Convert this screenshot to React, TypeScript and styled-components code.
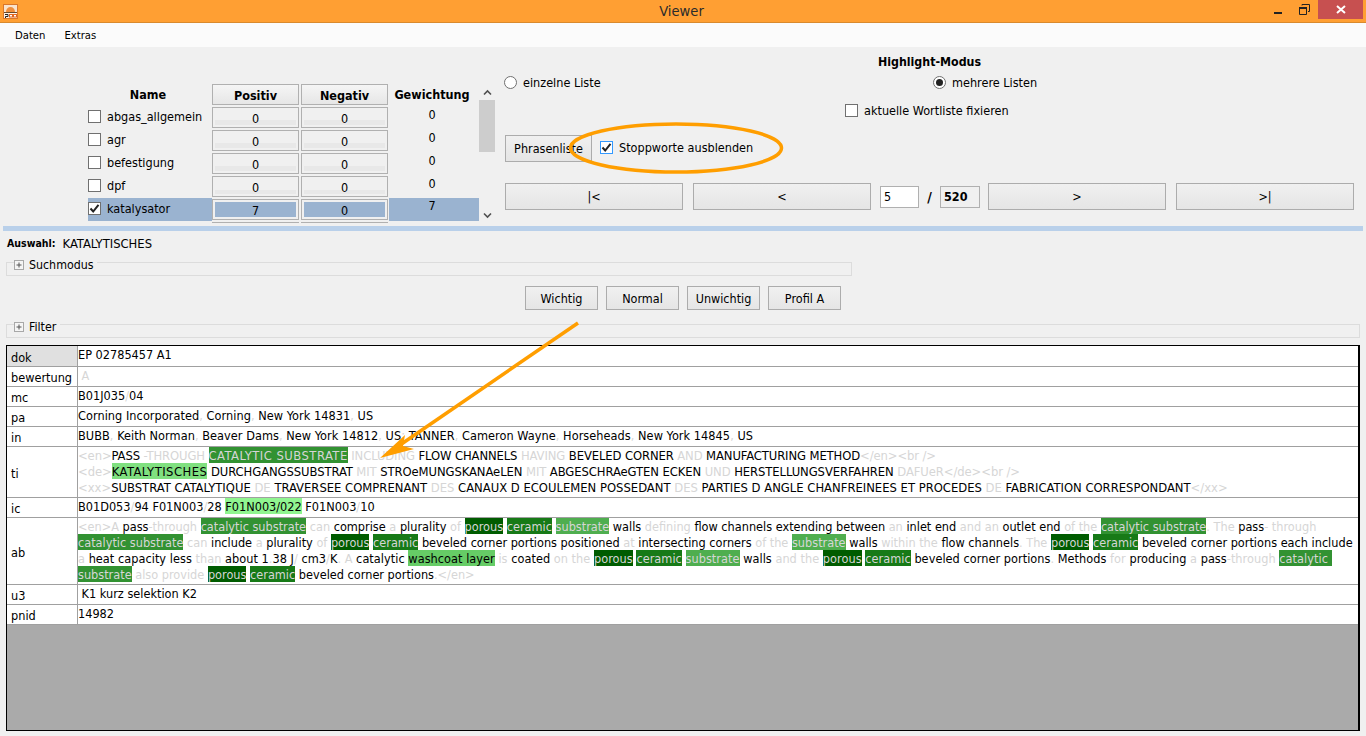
import React from "react";
import styled, { createGlobalStyle } from "styled-components";

const FONT = `"DejaVu Sans", "Noto Sans", sans-serif`;

const Global = createGlobalStyle`
  html, body { margin: 0; padding: 0; width: 1366px; height: 736px; overflow: hidden; background: #f0f0f0; }
  body { font-family: ${FONT}; font-size: 12.5px; color: #000; }
  * { box-sizing: border-box; }
`;

const Page = styled.div`
  position: relative;
  width: 1366px;
  height: 736px;
  display: flex;
  flex-direction: column;
  font-stretch: condensed;
`;

const TitleBar = styled.div`
  height: 23px;
  flex: none;
  display: grid;
  grid-template-columns: 1fr auto;
  align-items: start;
  background: #ff9f33;
  border-bottom: 1px solid #d98a2e;
`;
const TitleLeft = styled.div`
  display: flex;
  align-items: center;
  height: 22px;
  padding-left: 3px;
`;
const Title = styled.div`
  flex: 1;
  text-align: center;
  font-size: 14.6px;
  color: #2b2b2b;
  padding: 0 0 1px 80px;
`;
const WinControls = styled.div`
  display: flex;
  align-items: flex-start;
`;
const WinBtn = styled.div<{ $w: number; $close?: boolean }>`
  display: flex;
  align-items: center;
  justify-content: center;
  width: ${(p) => p.$w}px;
  height: 19px;
  margin-right: ${(p) => (p.$close ? "3px" : "0")};
  background: ${(p) => (p.$close ? "#c75050" : "transparent")};
`;

const MenuBar = styled.div`
  height: 24px;
  flex: none;
  display: flex;
  align-items: center;
  gap: 19px;
  padding-left: 15px;
  background: #fbfbfb;
  font-size: 11.2px;
`;

const TopPanel = styled.div`
  height: 178px;
  flex: none;
  display: flex;
`;
const ListArea = styled.div`
  width: 505px;
  padding: 37px 0 0 88px;
  display: flex;
  align-items: flex-start;
`;
const WordList = styled.div`
  width: 391px;
  height: 139px;
  overflow: hidden;
`;
const WordRow = styled.div`
  display: grid;
  grid-template-columns: 124px 87px 2px 87px 1px 90px;
  height: 23px;
`;
const HeaderLabel = styled.div<{ $col: number }>`
  grid-column: ${(p) => p.$col};
  display: flex;
  align-items: center;
  justify-content: center;
  padding-right: 4px;
  font-weight: bold;
  font-size: 12.5px;
  height: 21px;
`;
const HeaderButton = styled.div<{ $col: number }>`
  grid-column: ${(p) => p.$col};
  display: flex;
  align-items: center;
  justify-content: center;
  padding-top: 1px;
  height: 21px;
  font-weight: bold;
  font-size: 12.5px;
  border: 1px solid #b0b0b0;
  background: linear-gradient(#f5f5f5, #e6e6e6);
`;
const NameCell = styled.label<{ $sel?: boolean }>`
  display: flex;
  align-items: center;
  gap: 6px;
  height: 23px;
  margin-top: ${(p) => (p.$sel ? "-1px" : "0")};
  padding-bottom: ${(p) => (p.$sel ? "2px" : "4px")};
  font-size: 12.55px;
  background: ${(p) => (p.$sel ? "#9ab3d0" : "transparent")};
`;
const Spin = styled.div<{ $col: number }>`
  grid-column: ${(p) => p.$col};
  height: 21px;
  border: 1px solid #b0b0b0;
  padding: 2px;
  background: #f0f0f0;
`;
const SpinInner = styled.div<{ $sel?: boolean }>`
  height: 15px;
  padding-top: 2px;
  display: flex;
  align-items: center;
  justify-content: center;
  font-size: 12.5px;
  background: ${(p) => (p.$sel ? "#9ab3d0" : "linear-gradient(#f0f0f0 70%, #e8e8e8 70%)")};
`;
const WeightCell = styled.div<{ $sel?: boolean; $col: number }>`
  grid-column: ${(p) => p.$col};
  display: flex;
  align-items: center;
  justify-content: center;
  height: 23px;
  margin-top: ${(p) => (p.$sel ? "-1px" : "0")};
  padding: 0 4px 8px 0;
  font-size: 12.5px;
  background: ${(p) => (p.$sel ? "#9ab3d0" : "transparent")};
`;
const ScrollBar = styled.div`
  width: 16px;
  height: 139px;
  background: #f0f0f0;
  display: flex;
  flex-direction: column;
  align-items: center;
`;
const ScrollEnd = styled.div`
  height: 16px;
  flex: none;
  display: flex;
  align-items: center;
  justify-content: center;
`;
const ScrollTrack = styled.div`
  flex: 1;
  width: 100%;
`;
const ScrollThumb = styled.div`
  height: 52px;
  width: 100%;
  background: #cdcdcd;
`;

const Box = styled.span<{ $focus?: boolean }>`
  flex: none;
  display: inline-flex;
  align-items: center;
  justify-content: center;
  width: 13px;
  height: 13px;
  background: #fff;
  border: 1px solid ${(p) => (p.$focus ? "#3399ff" : "#707070")};
`;
const Radio = styled.span<{ $on?: boolean }>`
  flex: none;
  display: inline-flex;
  align-items: center;
  justify-content: center;
  width: 13px;
  height: 13px;
  border-radius: 50%;
  background: #fff;
  border: 1px solid #707070;
  &::after {
    content: "";
    display: ${(p) => (p.$on ? "block" : "none")};
    width: 7px;
    height: 7px;
    border-radius: 50%;
    background: #222;
  }
`;

const Controls = styled.div`
  width: 849px;
  padding-top: 7px;
  display: flex;
  flex-direction: column;
`;
const ModeHeading = styled.div`
  height: 16px;
  line-height: 16px;
  text-align: center;
  font-weight: bold;
  font-size: 12.3px;
`;
const RadioRow = styled.div`
  margin-top: 4px;
  height: 16px;
  display: grid;
  grid-template-columns: 428px 1fr;
`;
const Option = styled.label<{ $indent?: number; $raise?: number }>`
  display: flex;
  align-items: center;
  gap: 6px;
  height: 16px;
  font-size: 12.55px;
  margin-left: ${(p) => p.$indent ?? 0}px;
  margin-top: ${(p) => p.$raise ?? 0}px;
`;
const FixRow = styled.div`
  margin-top: 12px;
  height: 16px;
  padding-left: 340px;
`;
const PhraseRow = styled.div`
  margin-top: 17px;
  height: 27px;
  display: flex;
  align-items: flex-start;
  gap: 8px;
`;
const Btn = styled.button<{ $w?: number; $h?: number; $ml?: number }>`
  font-family: ${FONT};
  font-size: 12.5px;
  font-stretch: condensed;
  color: #000;
  padding: 0;
  flex: none;
  width: ${(p) => p.$w ?? 73}px;
  height: ${(p) => p.$h ?? 24}px;
  margin-left: ${(p) => p.$ml ?? 0}px;
  border: 1px solid #acacac;
  background: linear-gradient(#f0f0f0, #e5e5e5);
`;
const NavRow = styled.div`
  margin-top: 21px;
  height: 27px;
  display: flex;
  align-items: center;
`;
const PageInput = styled.div`
  width: 39px;
  height: 22px;
  margin-left: 9px;
  padding-left: 3px;
  display: flex;
  align-items: center;
  background: #fff;
  border: 1px solid #b0b0b0;
  font-size: 12.5px;
`;
const Slash = styled.div`
  width: 21px;
  text-align: center;
  font-weight: bold;
  font-size: 14px;
`;
const PageTotal = styled(PageInput)`
  margin-left: 0;
  width: 40px;
  background: #f0f0f0;
  font-weight: bold;
  margin-right: 8px;
`;

const Separator = styled.div`
  flex: none;
  height: 5px;
  margin: 1px 3px 0;
  background: #b9d0ea;
`;
const Selection = styled.div`
  flex: none;
  margin-top: 4px;
  height: 16px;
  padding-left: 7px;
  display: flex;
  align-items: center;
  gap: 7px;
  font-size: 12.9px;
`;
const Strong = styled.b`
  font-size: 10.5px;
`;

const Group = styled.div<{ $w: number; $mt: number }>`
  flex: none;
  width: ${(p) => p.$w}px;
  height: 14px;
  margin: ${(p) => p.$mt}px 0 0 6px;
  border: 1px solid #dcdcdc;
`;
const Legend = styled.div`
  display: inline-flex;
  align-items: center;
  gap: 5px;
  height: 14px;
  margin: -5px 0 0 7px;
  padding-right: 4px;
  background: #f0f0f0;
  font-size: 12.3px;
  vertical-align: top;
`;
const PlusBox = styled.span`
  width: 10px;
  height: 10px;
  flex: none;
  display: flex;
`;
const ProfileRow = styled.div`
  flex: none;
  margin-top: 10px;
  height: 24px;
  display: flex;
  justify-content: center;
  gap: 8px;
`;

const TableShell = styled.div`
  flex: none;
  margin: 7px 6px 0;
  height: 386px;
  background: #aaaaaa;
  border: 1px solid #000;
  border-right-width: 2px;
  display: flex;
  flex-direction: column;
`;
const Row = styled.div<{ $h: number }>`
  flex: none;
  height: ${(p) => p.$h}px;
  display: grid;
  grid-template-columns: 71px 1fr;
  background: #fff;
  border-bottom: 1px solid #a0a0a0;
`;
const Label = styled.div<{ $head?: boolean }>`
  display: flex;
  align-items: center;
  padding: 2px 0 0 4px;
  font-size: 12.6px;
  border-right: 1px solid #a0a0a0;
  background: ${(p) => (p.$head ? "#e0e0e0" : "#fff")};
`;
const Value = styled.div<{ $caps?: boolean }>`
  font-size: ${(p) => (p.$caps ? "12.9px" : "12.6px")};
  line-height: 16px;
  white-space: pre;
  overflow: hidden;
`;
const LineBox = styled.div<{ $ls?: number }>`
  height: 16px;
  letter-spacing: ${(p) => p.$ls ?? 0}px;
`;

const COLORS: Record<string, [string, string]> = {
  s: ["transparent", "#d6d6d6"],
  n: ["transparent", "#000"],
  a: ["#005c00", "#d6d6d6"],
  b: ["#177a17", "#d6d6d6"],
  c: ["#329232", "#d6d6d6"],
  d: ["#4fae4f", "#d6d6d6"],
  e: ["#66cc66", "#000"],
  k: ["#80e080", "#000"],
  f: ["#90f590", "#000"],
};
const Tok = styled.span<{ $k: string; $wide?: boolean }>`
  display: inline-block;
  vertical-align: top;
  height: 16px;
  line-height: 18px;
  letter-spacing: ${(p) => (p.$wide ? "0.48px" : "inherit")};
  background: ${(p) => COLORS[p.$k][0]};
  color: ${(p) => COLORS[p.$k][1]};
`;

type T = [string, string];
const Line = ({ t, ls, wide }: { t: T[]; ls?: number; wide?: boolean }) => (
  <LineBox $ls={ls}>
    {t.map(([k, s], i) => (
      <Tok key={i} $k={k} $wide={wide && (k === "c" || k === "k")}>
        {s}
      </Tok>
    ))}
  </LineBox>
);

const Check = () => (
  <svg width="11" height="11" viewBox="0 0 11 11">
    <path d="M1.5 5.5 L4.2 8.5 L9.5 1.8" fill="none" stroke="#222" strokeWidth="2" />
  </svg>
);
const Plus = () => (
  <PlusBox>
    <svg width="10" height="10" viewBox="0 0 10 10">
      <rect x="0.5" y="0.5" width="9" height="9" fill="#f5f5f5" stroke="#a8a8a8" />
      <path d="M2.5 5H7.5M5 2.5V7.5" stroke="#555" strokeWidth="1" />
    </svg>
  </PlusBox>
);
const Chevron = ({ up }: { up?: boolean }) => (
  <svg width="9" height="7" viewBox="0 0 9 7">
    <path d={up ? "M1 5.5L4.5 2L8 5.5" : "M1 1.5L4.5 5L8 1.5"} fill="none" stroke="#505050" strokeWidth="1.6" />
  </svg>
);

const WORDS = [
  ["abgas_allgemein", "0", "0", "0"],
  ["agr", "0", "0", "0"],
  ["befestigung", "0", "0", "0"],
  ["dpf", "0", "0", "0"],
  ["katalysator", "7", "0", "7"],
];

const TI: { ls: number; t: T[] }[] = [
  { ls: -0.1, t: [["s", "<en>"], ["n", "PASS "], ["s", "-THROUGH "], ["c", "CATALYTIC SUBSTRATE"], ["s", " INCLUDING "], ["n", "FLOW CHANNELS "], ["s", "HAVING "], ["n", "BEVELED CORNER "], ["s", "AND "], ["n", "MANUFACTURING METHOD"], ["s", "</en><br />"]] },
  { ls: -0.08, t: [["s", "<de>"], ["k", "KATALYTISCHES"], ["n", " DURCHGANGSSUBSTRAT "], ["s", "MIT "], ["n", "STROeMUNGSKANAeLEN "], ["s", "MIT "], ["n", "ABGESCHRAeGTEN ECKEN "], ["s", "UND "], ["n", "HERSTELLUNGSVERFAHREN "], ["s", "DAFUeR</de><br />"]] },
  { ls: 0, t: [["s", "<xx>"], ["n", "SUBSTRAT CATALYTIQUE "], ["s", "DE "], ["n", "TRAVERSEE COMPRENANT "], ["s", "DES "], ["n", "CANAUX D ECOULEMEN POSSEDANT "], ["s", "DES "], ["n", "PARTIES D ANGLE CHANFREINEES ET PROCEDES "], ["s", "DE "], ["n", "FABRICATION CORRESPONDANT"], ["s", "</xx>"]] },
];
const AB: { ls: number; t: T[] }[] = [
  { ls: 0, t: [["s", "<en>A "], ["n", "pass"], ["s", "-through "], ["c", "catalytic substrate"], ["s", " can "], ["n", "comprise "], ["s", "a "], ["n", "plurality "], ["s", "of "], ["a", "porous"], ["s", " "], ["b", "ceramic"], ["s", " "], ["d", "substrate"], ["n", " walls "], ["s", "defining "], ["n", "flow channels extending between "], ["s", "an "], ["n", "inlet end "], ["s", "and an "], ["n", "outlet end "], ["s", "of the "], ["c", "catalytic substrate"], ["s", ". The "], ["n", "pass"], ["s", "- through"]] },
  { ls: 0, t: [["c", "catalytic substrate"], ["s", " can "], ["n", "include "], ["s", "a "], ["n", "plurality "], ["s", "of "], ["a", "porous"], ["s", " "], ["b", "ceramic"], ["n", " beveled corner portions positioned "], ["s", "at "], ["n", "intersecting corners "], ["s", "of the "], ["d", "substrate"], ["n", " walls "], ["s", "within the "], ["n", "flow channels"], ["s", ". The "], ["a", "porous"], ["s", " "], ["b", "ceramic"], ["n", " beveled corner portions each include"]] },
  { ls: 0.04, t: [["s", "a "], ["n", "heat capacity less "], ["s", "than "], ["n", "about 1"], ["s", "."], ["n", "38 J"], ["s", "/ "], ["n", "cm3"], ["s", "/"], ["n", "K"], ["s", ". A "], ["n", "catalytic "], ["e", "washcoat layer"], ["s", " is "], ["n", "coated "], ["s", "on the "], ["a", "porous"], ["s", " "], ["b", "ceramic"], ["s", " "], ["d", "substrate"], ["n", " walls "], ["s", "and the "], ["a", "porous"], ["s", " "], ["b", "ceramic"], ["n", " beveled corner portions"], ["s", ". "], ["n", "Methods "], ["s", "for "], ["n", "producing "], ["s", "a "], ["n", "pass"], ["s", "-through "], ["c", "catalytic "]] },
  { ls: 0, t: [["c", "substrate"], ["s", " also provide "], ["a", "porous"], ["s", " "], ["b", "ceramic"], ["n", " beveled corner portions"], ["s", ".</en>"]] },
];

export default function App() {
  return (
    <Page>
      <Global />
      <TitleBar>
        <TitleLeft>
          <svg width="15" height="15" viewBox="0 0 15 15">
            <rect x="0.5" y="0.5" width="14" height="14" fill="#f9e3cc" stroke="#d9772a" />
            <path d="M3 8a4.5 5 0 0 1 9 0z" fill="#ee8f3e" />
            <rect x="1" y="8" width="13" height="1" fill="#6b4a2a" />
            <rect x="1" y="9" width="13" height="5" fill="#fdf3e8" />
            <path d="M2 10.5H5V12.5H2.5V14" fill="none" stroke="#222" strokeWidth="1" />
            <rect x="6.5" y="10.5" width="3" height="2.5" fill="#fff" stroke="#e2661e" />
            <rect x="10.5" y="10.5" width="3" height="2.5" fill="#fff" stroke="#e2661e" />
          </svg>
          <Title>Viewer</Title>
        </TitleLeft>
        <WinControls>
          <WinBtn $w={26}>
            <svg width="10" height="10" viewBox="0 0 10 10"><rect x="1" y="7" width="8" height="2" fill="#222" /></svg>
          </WinBtn>
          <WinBtn $w={27}>
            <svg width="11" height="11" viewBox="0 0 11 11">
              <path d="M0.5 3.5H7.5V10.5H0.5z" fill="none" stroke="#222" />
              <rect x="0" y="3" width="8" height="2" fill="#222" />
              <path d="M3 1.5V0.5H10.5V7.5H9" fill="none" stroke="#222" />
            </svg>
          </WinBtn>
          <WinBtn $w={45} $close>
            <svg width="10" height="9" viewBox="0 0 10 9"><path d="M1 1L9 8M9 1L1 8" stroke="#fff" strokeWidth="2" /></svg>
          </WinBtn>
        </WinControls>
      </TitleBar>
      <MenuBar>
        <span>Daten</span>
        <span>Extras</span>
      </MenuBar>
      <TopPanel>
        <ListArea>
          <WordList>
            <WordRow>
              <HeaderLabel $col={1}>Name</HeaderLabel>
              <HeaderButton $col={2}>Positiv</HeaderButton>
              <HeaderButton $col={4}>Negativ</HeaderButton>
              <HeaderLabel $col={6}>Gewichtung</HeaderLabel>
            </WordRow>
            {WORDS.map(([n, p, m, w]) => {
              const sel = n === "katalysator";
              return (
                <WordRow key={n}>
                  <NameCell $sel={sel}>
                    <Box>{sel && <Check />}</Box>
                    {n}
                  </NameCell>
                  <Spin $col={2}><SpinInner $sel={sel}>{p}</SpinInner></Spin>
                  <Spin $col={4}><SpinInner $sel={sel}>{m}</SpinInner></Spin>
                  <WeightCell $col={6} $sel={sel}>{w}</WeightCell>
                </WordRow>
              );
            })}
            <WordRow>
              <span />
              <Spin $col={2} />
              <Spin $col={4} />
            </WordRow>
          </WordList>
          <ScrollBar>
            <ScrollEnd><Chevron up /></ScrollEnd>
            <ScrollThumb />
            <ScrollTrack />
            <ScrollEnd><Chevron /></ScrollEnd>
          </ScrollBar>
        </ListArea>
        <Controls>
          <ModeHeading>Highlight-Modus</ModeHeading>
          <RadioRow>
            <Option $indent={-1}><Radio />einzelne Liste</Option>
            <Option><Radio $on />mehrere Listen</Option>
          </RadioRow>
          <FixRow>
            <Option><Box />aktuelle Wortliste fixieren</Option>
          </FixRow>
          <PhraseRow>
            <Btn $w={87} $h={27}>Phrasenliste</Btn>
            <Option $raise={4}><Box $focus><Check /></Box>Stoppworte ausblenden</Option>
          </PhraseRow>
          <NavRow>
            <Btn $w={178} $h={27}>|&lt;</Btn>
            <Btn $w={178} $h={27} $ml={10}>&lt;</Btn>
            <PageInput>5</PageInput>
            <Slash>/</Slash>
            <PageTotal>520</PageTotal>
            <Btn $w={178} $h={27}>&gt;</Btn>
            <Btn $w={178} $h={27} $ml={10}>&gt;|</Btn>
          </NavRow>
        </Controls>
      </TopPanel>
      <Separator />
      <Selection>
        <Strong>Auswahl:</Strong>
        <span>KATALYTISCHES</span>
      </Selection>
      <Group $w={846} $mt={11}>
        <Legend><Plus />Suchmodus</Legend>
      </Group>
      <ProfileRow>
        <Btn>Wichtig</Btn>
        <Btn>Normal</Btn>
        <Btn>Unwichtig</Btn>
        <Btn>Profil A</Btn>
      </ProfileRow>
      <Group $w={1354} $mt={14}>
        <Legend><Plus />Filter</Legend>
      </Group>
      <TableShell>
        <Row $h={21}>
          <Label $head>dok</Label>
          <Value><Line t={[["n", "EP 02785457 A1"]]} /></Value>
        </Row>
        <Row $h={20}>
          <Label>bewertung</Label>
          <Value><Line t={[["s", " A"]]} /></Value>
        </Row>
        <Row $h={20}>
          <Label>mc</Label>
          <Value><Line t={[["n", "B01J035"], ["s", "/"], ["n", "04"]]} /></Value>
        </Row>
        <Row $h={20}>
          <Label>pa</Label>
          <Value><Line ls={0.05} t={[["n", "Corning Incorporated"], ["s", ", "], ["n", "Corning"], ["s", ", "], ["n", "New York 14831"], ["s", ", "], ["n", "US"]]} /></Value>
        </Row>
        <Row $h={20}>
          <Label>in</Label>
          <Value><Line ls={0.05} t={[["n", "BUBB"], ["s", ", "], ["n", "Keith Norman"], ["s", ", "], ["n", "Beaver Dams"], ["s", ", "], ["n", "New York 14812"], ["s", ", "], ["n", "US"], ["s", "; "], ["n", "TANNER"], ["s", ", "], ["n", "Cameron Wayne"], ["s", ", "], ["n", "Horseheads"], ["s", ", "], ["n", "New York 14845"], ["s", ", "], ["n", "US"]]} /></Value>
        </Row>
        <Row $h={51}>
          <Label>ti</Label>
          <Value $caps>{TI.map((l, i) => <Line key={i} t={l.t} ls={l.ls} wide />)}</Value>
        </Row>
        <Row $h={20}>
          <Label>ic</Label>
          <Value><Line t={[["n", "B01D053"], ["s", "/"], ["n", "94 F01N003"], ["s", "/"], ["n", "28 "], ["f", "F01N003/022"], ["n", " F01N003"], ["s", "/"], ["n", "10"]]} /></Value>
        </Row>
        <Row $h={67}>
          <Label>ab</Label>
          <Value>{AB.map((l, i) => <Line key={i} t={l.t} ls={l.ls} />)}</Value>
        </Row>
        <Row $h={20}>
          <Label>u3</Label>
          <Value><Line t={[["n", " K1 kurz selektion K2"]]} /></Value>
        </Row>
        <Row $h={20}>
          <Label>pnid</Label>
          <Value><Line t={[["n", "14982"]]} /></Value>
        </Row>
      </TableShell>
      <svg style={{ position: "absolute", left: 0, top: 0, pointerEvents: "none" }} width="1366" height="736" viewBox="0 0 1366 736">
        <ellipse cx="676" cy="148" rx="105.5" ry="24" fill="none" stroke="#ff9e00" strokeWidth="3.5" />
        <path d="M578 323L400 445" stroke="#ff9e00" strokeWidth="3.5" fill="none" />
        <path d="M380 458L405 435L403 446L414 449z" fill="#ff9e00" />
      </svg>
    </Page>
  );
}
